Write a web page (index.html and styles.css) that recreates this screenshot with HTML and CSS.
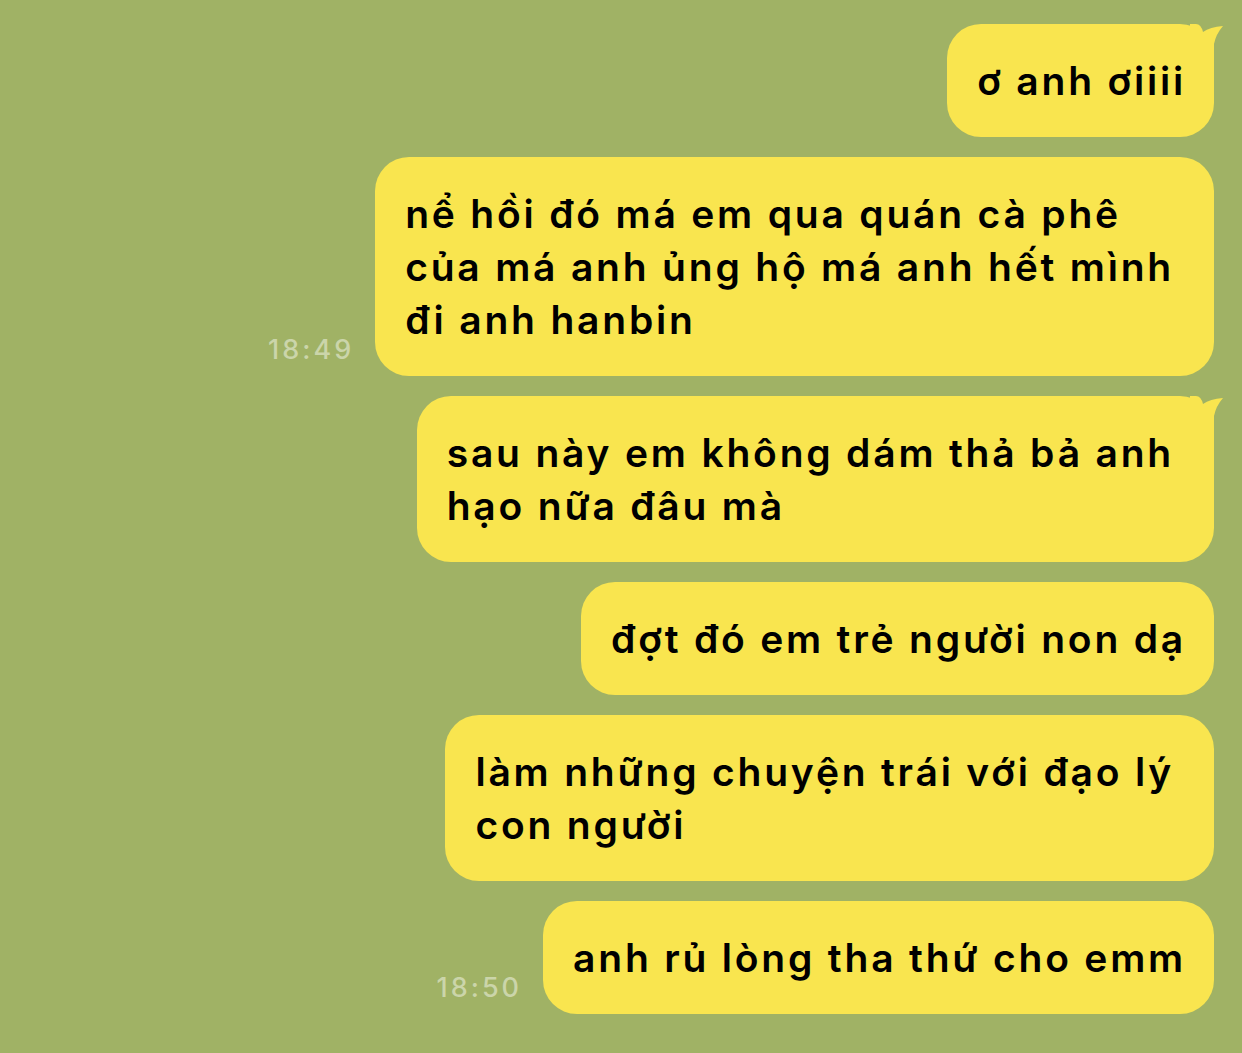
FILE: index.html
```html
<!DOCTYPE html>
<html lang="vi">
<head>
    <meta charset="UTF-8">
    <meta name="viewport" content="width=device-width, initial-scale=1.0">
    <title>Chat</title>
    <link rel="stylesheet" href="styles.css">
</head>
<body>
    <div class="chat">
        <div class="row">
            <div class="bubble tail">ơ anh ơiiii
                <svg class="tail-svg" viewBox="0 0 34 34" width="34" height="34"><path d="M0 0 H6 Q11 0 13 8 Q20 3 33 2 Q26 10 24 20 V34 H0 Z"/></svg>
            </div>
        </div>
        <div class="row">
            <span class="time">18:49</span>
            <div class="bubble wrap">nể hồi đó má em qua quán cà phê<br>của má anh ủng hộ má anh hết mình<br>đi anh hanbin</div>
        </div>
        <div class="row">
            <div class="bubble wrap tail">sau này em không dám thả bả anh<br>hạo nữa đâu mà
                <svg class="tail-svg" viewBox="0 0 34 34" width="34" height="34"><path d="M0 0 H6 Q11 0 13 8 Q20 3 33 2 Q26 10 24 20 V34 H0 Z"/></svg>
            </div>
        </div>
        <div class="row">
            <div class="bubble">đợt đó em trẻ người non dạ</div>
        </div>
        <div class="row">
            <div class="bubble wrap">làm những chuyện trái với đạo lý<br>con người</div>
        </div>
        <div class="row">
            <span class="time">18:50</span>
            <div class="bubble">anh rủ lòng tha thứ cho emm</div>
        </div>
    </div>
</body>
</html>
```

FILE: styles.css
```css
body {
    margin: 0;
    background-color: #a0b265;
    font-family: Inter, "Noto Sans", sans-serif;
}
.chat {
    display: flex;
    flex-direction: column;
    gap: 20px;
    padding: 24px 28px 0 0;
}
.row {
    display: flex;
    justify-content: flex-end;
    align-items: flex-end;
    gap: 21px;
}
.bubble {
    position: relative;
    background-color: #f9e54f;
    color: #000;
    font-size: 39px;
    font-weight: 600;
    letter-spacing: 2.8px;
    line-height: 53px;
    padding: 30px 28px 30px 30px;
    border-radius: 34px;
    white-space: nowrap;
}
.bubble.wrap {
    padding-right: 40px;
}
.tail-svg {
    position: absolute;
    top: 0;
    right: -10px;
    fill: #f9e54f;
}
.time {
    color: #cbd5aa;
    font-size: 27px;
    font-weight: 500;
    letter-spacing: 3px;
    padding-bottom: 10px;
}
```
